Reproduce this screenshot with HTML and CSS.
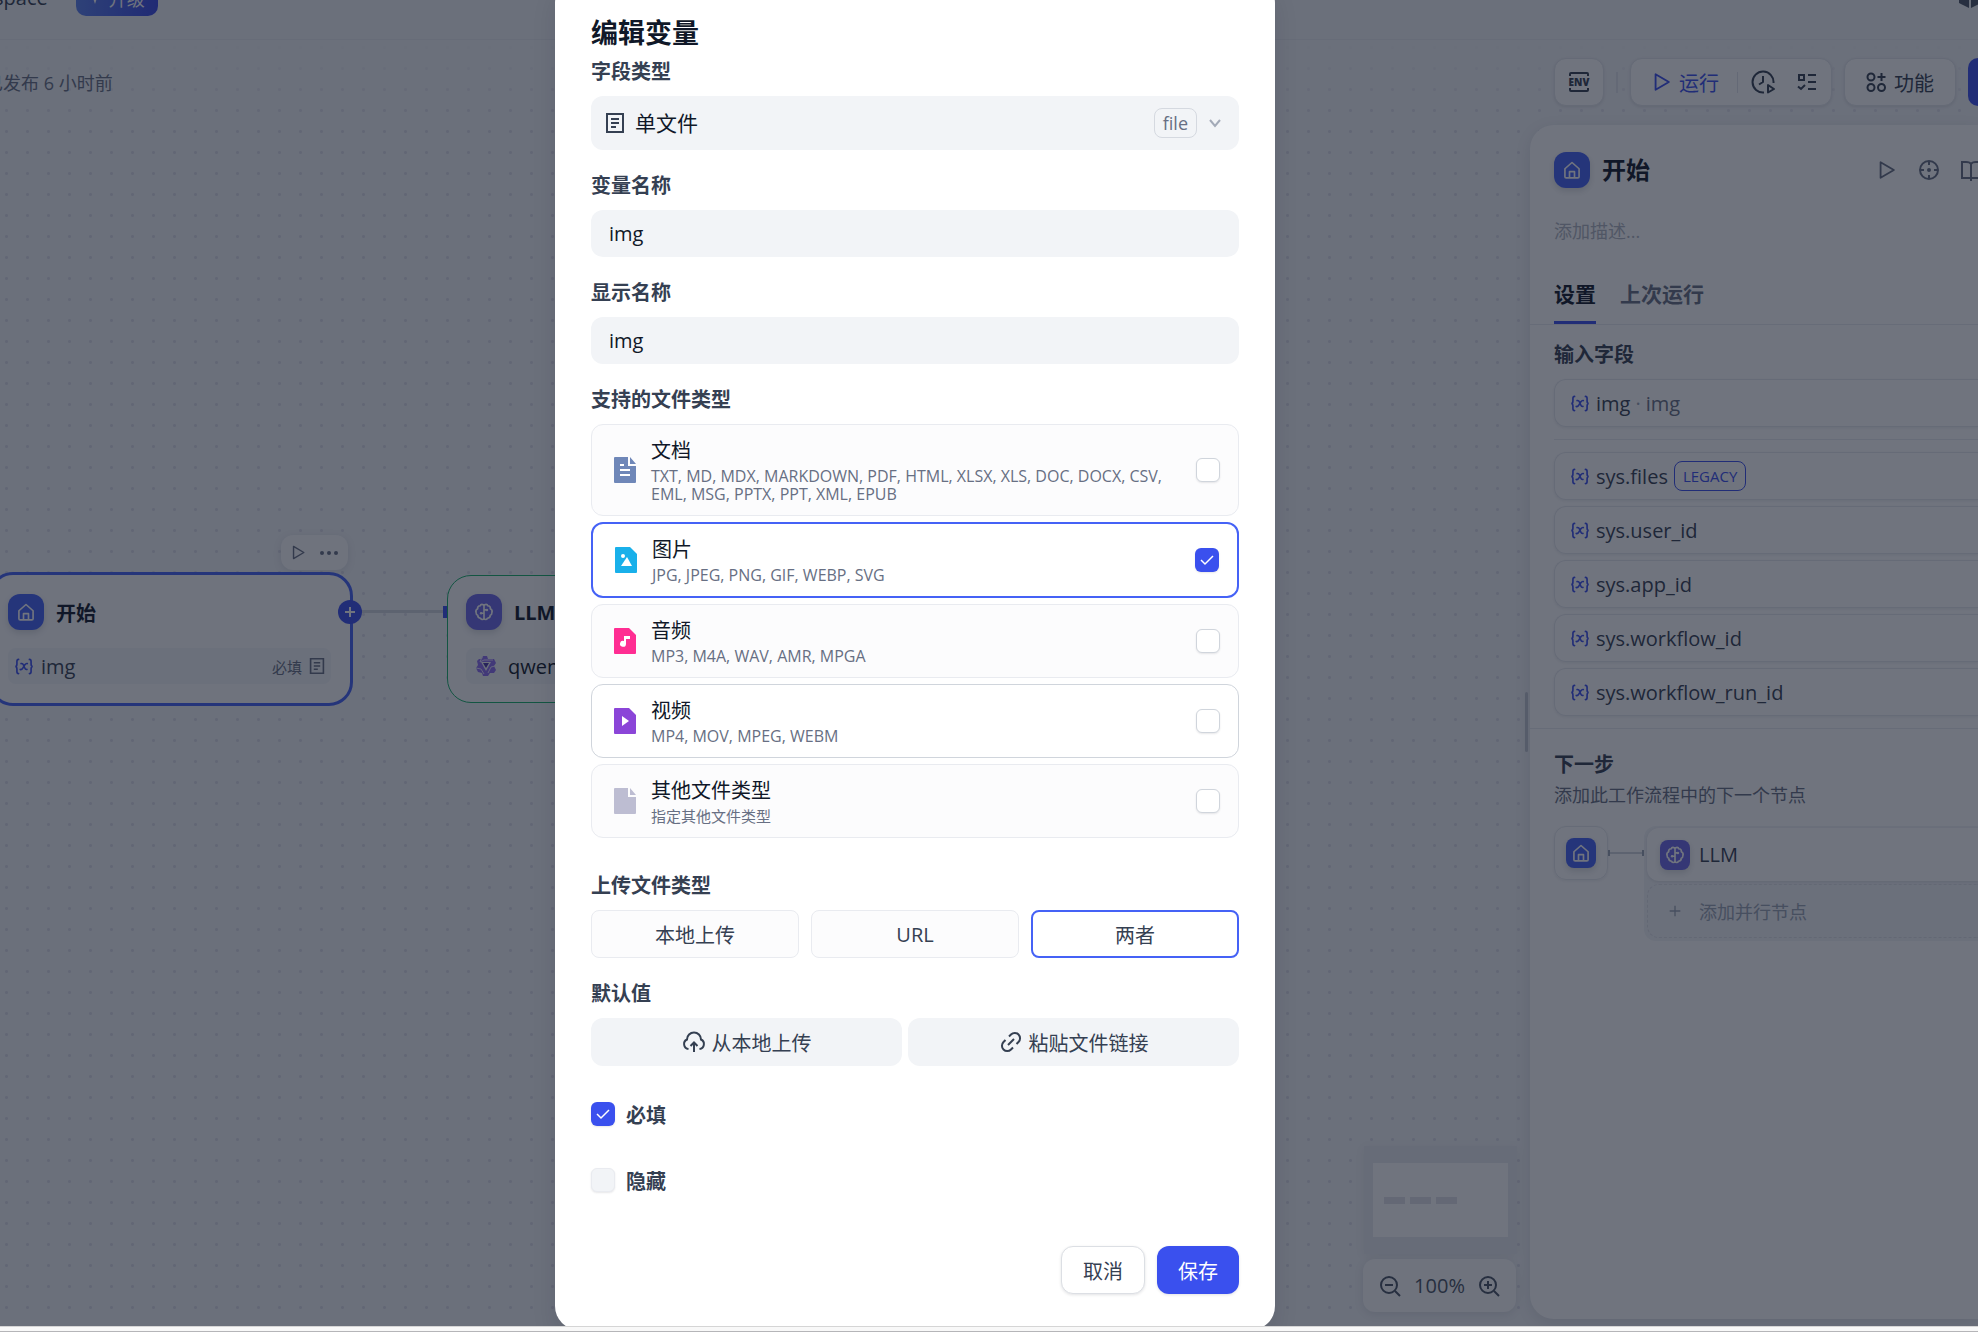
FILE: index.html
```html
<!DOCTYPE html>
<html lang="zh-CN">
<head>
    <meta charset="UTF-8">
    <meta name="viewport" content="width=device-width, initial-scale=1.0">
    <title>编辑变量</title>
    <link rel="stylesheet" href="styles.css">
</head>
<body>
    <!-- shared icons -->
    <svg class="sprite" aria-hidden="true">
        <symbol id="i-home" viewBox="0 0 24 24"><path d="M3.500 10.500 12 3l8.500 7.500V20a1.500 1.500 0 0 1-1.500 1.500H5A1.500 1.500 0 0 1 3.500 20z M9 21v-7h6v7" fill="none" stroke="currentColor" stroke-width="2" stroke-linejoin="round"/></symbol>
        <symbol id="i-llm" viewBox="0 0 24 24"><path d="M12 4v16M12 4.500C11 2.500 8 2.300 7.500 4.500 5 4.500 4 6.500 4.500 8 2.300 9 2 11 2.500 12.500 2.500 14 3 15.500 4.500 16 4.500 18.500 6 19.500 8 19.500 8.500 21.500 11.500 21.500 12 19.500M12 4.500C13 2.500 16 2.300 16.500 4.500 19 4.500 20 6.500 19.500 8 21.700 9 22 11 21.500 12.500 21.500 14 21 15.500 19.500 16 19.500 18.500 18 19.500 16 19.500 15.500 21.500 12.500 21.500 12 19.500M12 9.500h3.500M8 13.500h4" fill="none" stroke="currentColor" stroke-width="2" stroke-linejoin="round"/><circle cx="15.500" cy="9.500" r="1.500" fill="currentColor"/><circle cx="8.500" cy="13.500" r="1.500" fill="currentColor"/></symbol>
        <symbol id="i-play" viewBox="0 0 24 24"><path d="M5 3.500v17L19.500 12z" fill="none" stroke="currentColor" stroke-width="2" stroke-linejoin="round"/></symbol>
        <symbol id="i-var" viewBox="0 0 24 20"><path d="M5.500 1.500Q3.500 1.500 3.500 4v3Q3.500 10 1.500 10q2 0 2 3v3q0 2.500 2 2.500M18.500 1.500q2 0 2 2.500v3q0 3 2 3-2 0-2 3v3q0 2.500-2 2.500M8.500 6.500q2-.5 3 2l1.300 3q1 2.500 2.700 2M16 6.500q-1.500-.5-3 1.500l-2.500 4Q9 14.200 7.500 13.500" fill="none" stroke="currentColor" stroke-width="2" stroke-linecap="round"/></symbol>
        <symbol id="i-list" viewBox="0 0 20 20"><path d="M2 1h16v18H2zM6 6h8M6 10h8M6 14h5" fill="none" stroke="currentColor" stroke-width="2"/></symbol>
    </svg>

    <div class="app">
        <header class="topbar">
            <span class="workspace">space</span>
            <svg class="workspace-arrow" viewBox="0 0 10 10"><path d="M2 3l3 4 3-4" fill="currentColor"/></svg>
            <button class="upgrade"><svg viewBox="0 0 16 16"><path d="M8 0l2 6 6 2-6 2-2 6-2-6-6-2 6-2z" fill="currentColor"/></svg>升级</button>
            <svg class="cube" viewBox="0 0 22 24"><path d="M0 7l10-5v20L0 17zM12 2l10 5v10l-10 5z" fill="currentColor"/></svg>
        </header>

        <div class="toolbar">
            <span class="published">已发布 6 小时前</span>
            <div class="tools">
                <button class="tool" aria-label="环境变量">
                    <svg class="env" viewBox="0 0 22 22"><path d="M2 5V3q0-1 1-1h16q1 0 1 1v2M2 17v2q0 1 1 1h16q1 0 1-1v-2" fill="none" stroke="currentColor" stroke-width="2"/><text x="11" y="15" text-anchor="middle">ENV</text></svg>
                </button>
                <i class="sep"></i>
                <div class="tool run-group">
                    <button class="run"><svg width="22" height="22"><use href="#i-play"/></svg>运行</button>
                    <i class="sep"></i>
                    <button class="plain" aria-label="运行历史">
                        <svg width="24" height="24" viewBox="0 0 24 24" fill="none" stroke="currentColor" stroke-width="2"><path d="M13 22.500A10.500 10.500 0 1 1 22.500 13M12 6v6l-4 2.500M17 15v7.500l6-3.500z" stroke-linejoin="round"/></svg>
                    </button>
                    <button class="plain" aria-label="检查清单">
                        <svg width="20" height="20" viewBox="0 0 20 20" fill="none" stroke="currentColor" stroke-width="2"><path d="M2 3h5v5H2zM11 3h8M11 10h8M11 17h8M1 14.500 4 17l4-4"/></svg>
                    </button>
                </div>
                <button class="tool feature">
                    <svg width="20" height="20" viewBox="0 0 20 20" fill="none" stroke="currentColor" stroke-width="2"><circle cx="5" cy="5" r="3.500"/><circle cx="5" cy="15.500" r="3.500"/><circle cx="15.500" cy="15.500" r="3.500"/><path d="M15.500 1v8M11.500 5h8"/></svg>
                    功能
                </button>
                <button class="publish" aria-label="发布"></button>
            </div>
        </div>

        <main class="canvas">
            <div class="node-menu">
                <svg width="17" height="17"><use href="#i-play"/></svg>
                <svg width="20" height="6" viewBox="0 0 20 6" fill="currentColor"><circle cx="3" cy="3" r="2"/><circle cx="10" cy="3" r="2"/><circle cx="17" cy="3" r="2"/></svg>
            </div>
            <section class="node node-start">
                <div class="node-head"><span class="badge"><svg><use href="#i-home"/></svg></span>开始</div>
                <div class="node-row">
                    <svg class="var"><use href="#i-var"/></svg>
                    <span>img</span>
                    <small>必填</small>
                    <svg class="file-mark"><use href="#i-list"/></svg>
                </div>
            </section>
            <i class="edge"></i>
            <i class="port"></i>
            <button class="add-node" aria-label="添加节点"><svg viewBox="0 0 12 12"><path d="M6 1v10M1 6h10" stroke="currentColor" stroke-width="2"/></svg></button>
            <section class="node node-llm">
                <div class="node-head"><span class="badge violet"><svg><use href="#i-llm"/></svg></span>LLM</div>
                <div class="node-row model">
                    <svg width="22" height="22" viewBox="0 0 22 22"><path d="M8 1h4l1 3h6l2 4-2 3 2 4-2 3h-4l-2 3H8l-1-3-4-1-2-4 2-3-1-4 2-2h3z" fill="#8c6cf0"/><path d="M6 7h10l-5 9z" fill="#f2f4f7"/><path d="M8 8h6l-3 5z" fill="#4a36a8"/><path d="M1 13l5 1 3 5M7 2 5 7l4-2h9M20 11l-4 1-3 6" fill="none" stroke="#e4dcff"/></svg>
                    <span>qwen</span>
                </div>
            </section>

            <div class="minimap">
                <div class="minimap-view"><i></i><i></i><i></i></div>
            </div>
            <div class="zoom">
                <button class="plain" aria-label="缩小"><svg width="22" height="22" viewBox="0 0 22 22" fill="none" stroke="currentColor" stroke-width="2"><circle cx="10" cy="10" r="8"/><path d="M16 16l5 5M6 10h8"/></svg></button>
                <span>100%</span>
                <button class="plain" aria-label="放大"><svg width="22" height="22" viewBox="0 0 22 22" fill="none" stroke="currentColor" stroke-width="2"><circle cx="10" cy="10" r="8"/><path d="M16 16l5 5M6 10h8M10 6v8"/></svg></button>
            </div>
        </main>

        <i class="resize-handle"></i>
        <aside class="panel">
            <div class="panel-head">
                <span class="badge"><svg><use href="#i-home"/></svg></span>
                <h2>开始</h2>
                <div class="panel-actions">
                    <svg width="22" height="22"><use href="#i-play"/></svg>
                    <svg width="22" height="22" viewBox="0 0 22 22" fill="none" stroke="currentColor" stroke-width="2"><circle cx="11" cy="11" r="9"/><path d="M11 2v4M11 16v4M2 11h4M16 11h4"/><circle cx="11" cy="11" r="1"/></svg>
                    <svg width="18" height="22" viewBox="0 0 18 22" fill="none" stroke="currentColor" stroke-width="2"><path d="M18 3h-2q-4 0-5 2-1-2-5-2H2v16h16M11 5v17"/></svg>
                </div>
            </div>
            <p class="panel-desc">添加描述...</p>
            <nav class="tabs">
                <button class="tab active">设置</button>
                <button class="tab">上次运行</button>
            </nav>
            <div class="panel-body">
                <h3>输入字段</h3>
                <div class="field-row"><svg class="var"><use href="#i-var"/></svg>img<em>·</em><span>img</span></div>
                <hr>
                <div class="field-list">
                    <div class="field-row"><svg class="var"><use href="#i-var"/></svg>sys.files<b>LEGACY</b></div>
                    <div class="field-row"><svg class="var"><use href="#i-var"/></svg>sys.user_id</div>
                    <div class="field-row"><svg class="var"><use href="#i-var"/></svg>sys.app_id</div>
                    <div class="field-row"><svg class="var"><use href="#i-var"/></svg>sys.workflow_id</div>
                    <div class="field-row"><svg class="var"><use href="#i-var"/></svg>sys.workflow_run_id</div>
                </div>
            </div>
            <div class="panel-next">
                <h3>下一步</h3>
                <p>添加此工作流程中的下一个节点</p>
                <div class="next">
                    <div class="next-from"><span class="badge small"><svg><use href="#i-home"/></svg></span></div>
                    <i class="next-line"></i>
                    <div class="next-to">
                        <div class="next-node"><span class="badge small violet"><svg><use href="#i-llm"/></svg></span>LLM</div>
                        <button class="next-add"><svg viewBox="0 0 12 12"><path d="M6 2v8M2 6h8" stroke="currentColor" stroke-width="1"/></svg>添加并行节点</button>
                    </div>
                </div>
            </div>
        </aside>

        <div class="overlay">
            <form class="modal">
                <h1>编辑变量</h1>

                <label class="label" for="type">字段类型</label>
                <div class="select">
                    <svg width="20" height="20"><use href="#i-list"/></svg>
                    <select id="type"><option>单文件</option></select>
                    <span class="tag">file</span>
                    <svg class="chevron" width="14" height="14" viewBox="0 0 14 14"><path d="M2 4l5 6 5-6" fill="none" stroke="currentColor" stroke-width="2"/></svg>
                </div>

                <label class="label" for="name">变量名称</label>
                <input class="input" id="name" type="text" value="img">

                <label class="label" for="title">显示名称</label>
                <input class="input" id="title" type="text" value="img">

                <div class="label">支持的文件类型</div>
                <div class="types">
                    <label class="type">
                        <svg viewBox="0 0 30 30"><path d="M5 2h13v9h8v16q0 1-1 1H5q-1 0-1-1V3q0-1 1-1zM20 2l6 7h-6z" fill="#6f87b8"/><path d="M10 9h4v2h-4zM10 14h10v2H10zM10 19h10v2H10z" fill="#fff"/></svg>
                        <span><strong>文档</strong><small>TXT, MD, MDX, MARKDOWN, PDF, HTML, XLSX, XLS, DOC, DOCX, CSV, EML, MSG, PPTX, PPT, XML, EPUB</small></span>
                        <input type="checkbox">
                    </label>
                    <label class="type selected">
                        <svg viewBox="0 0 30 30"><path d="M5 2h14l7 7v18q0 1-1 1H5q-1 0-1-1V3q0-1 1-1z" fill="#19b0ea"/><path d="M10 21l6-9 5 9z" fill="#fff"/><circle cx="12" cy="11" r="2" fill="#fff"/></svg>
                        <span><strong>图片</strong><small>JPG, JPEG, PNG, GIF, WEBP, SVG</small></span>
                        <input type="checkbox" checked>
                    </label>
                    <label class="type">
                        <svg viewBox="0 0 30 30"><path d="M5 2h14l7 7v18q0 1-1 1H5q-1 0-1-1V3q0-1 1-1z" fill="#ff2d92"/><path d="M14 10h6v3h-4v5a3 3 0 1 1-2-3z" fill="#fff"/></svg>
                        <span><strong>音频</strong><small>MP3, M4A, WAV, AMR, MPGA</small></span>
                        <input type="checkbox">
                    </label>
                    <label class="type hover">
                        <svg viewBox="0 0 30 30"><path d="M5 2h14l7 7v18q0 1-1 1H5q-1 0-1-1V3q0-1 1-1z" fill="#8b45d8"/><path d="M12 10v10l7-5z" fill="#fff"/></svg>
                        <span><strong>视频</strong><small>MP4, MOV, MPEG, WEBM</small></span>
                        <input type="checkbox">
                    </label>
                    <label class="type">
                        <svg viewBox="0 0 30 30"><path d="M5 2h13v9h8v16q0 1-1 1H5q-1 0-1-1V3q0-1 1-1zM20 2l6 7h-6z" fill="#bdbdd2"/></svg>
                        <span><strong>其他文件类型</strong><small class="hint">指定其他文件类型</small></span>
                        <input type="checkbox">
                    </label>
                </div>

                <div class="label spaced">上传文件类型</div>
                <div class="methods">
                    <button type="button">本地上传</button>
                    <button type="button">URL</button>
                    <button type="button" class="selected">两者</button>
                </div>

                <div class="label">默认值</div>
                <div class="defaults">
                    <button type="button">
                        <svg viewBox="0 0 24 24"><path d="M6.500 19a5 5 0 0 1-1.500-9.500A7 7 0 0 1 19 9.500 5 5 0 0 1 17.500 19M12 22v-9M8.500 16l3.500-3.500 3.500 3.500"/></svg>
                        从本地上传
                    </button>
                    <button type="button">
                        <svg viewBox="0 0 24 24"><path d="M10 6.500l2-2a5.300 5.300 0 0 1 7.500 7.500L17.500 14M14 17.500l-2 2A5.300 5.300 0 0 1 4.500 12L6.500 10M9 15l6-6"/></svg>
                        粘贴文件链接
                    </button>
                </div>

                <label class="check"><input type="checkbox" checked>必填</label>
                <label class="check"><input type="checkbox" class="muted">隐藏</label>

                <div class="actions">
                    <button type="button" class="cancel">取消</button>
                    <button type="submit" class="save">保存</button>
                </div>
            </form>
        </div>
    </div>
    <footer class="frame-edge"></footer>
</body>
</html>
```
FILE: styles.css
```css
* {
    box-sizing: border-box;
}

body {
    margin: 0;
    height: 100vh;
    display: flex;
    flex-direction: column;
    overflow: hidden;
    font-family: "Open Sans", "Noto Sans CJK SC", sans-serif;
    font-size: 20px;
    color: #354052;
}

button,
input,
select {
    font: inherit;
    color: inherit;
    margin: 0;
}

button {
    display: flex;
    align-items: center;
    justify-content: center;
    padding: 0;
    border: none;
    background: none;
    cursor: pointer;
}

h1, h2, h3, p {
    margin: 0;
}

svg {
    display: block;
    flex: none;
}

.sprite {
    position: absolute;
    width: 0;
    height: 0;
}

.app {
    position: relative;
    flex: 1;
    min-height: 0;
    overflow: hidden;
    background-color: #f2f4f7;
    background-image: radial-gradient(circle, rgba(133, 133, 173, 0.2) 1px, transparent 2px);
    background-size: 21px 21px;
    background-position: -4px -5px;
}

.frame-edge {
    height: 6px;
    border-top: 1px solid #d5d5d5;
    border-bottom: 1px solid #b5b5b8;
    background: #f8f8f8;
}

/* top bar, scrolled half out of view */
.topbar {
    display: flex;
    align-items: center;
    height: 84px;
    margin-top: -44px;
    background: #f2f4f7;
    border-bottom: 1px solid #e9ebf0;
}

.workspace {
    margin-left: -6px;
    font-weight: 500;
}

.workspace-arrow {
    width: 10px;
    margin: 0 11px 0 7px;
}

.upgrade {
    width: 82px;
    height: 36px;
    gap: 8px;
    border-radius: 10px;
    background: linear-gradient(90deg, #5a80ee, #3a48e6);
    color: #fff;
    font-size: 18px;
}

.upgrade svg {
    width: 12px;
}

.cube {
    width: 22px;
    margin-left: auto;
    margin-right: -3px;
    color: #495464;
}

.toolbar {
    display: flex;
    align-items: center;
    justify-content: space-between;
    height: 84px;
    background: linear-gradient(#f2f4f7, rgba(242, 244, 247, 0));
}

.published {
    margin-left: -15px;
    font-size: 18px;
    color: #676f83;
}

.tools {
    display: flex;
    align-items: center;
    gap: 12px;
}

.tool {
    height: 48px;
    min-width: 50px;
    border: 1px solid #e3e5ea;
    border-radius: 12px;
    background: #fff;
    box-shadow: 0 1px 3px rgba(16, 24, 40, 0.1);
}

.env {
    width: 22px;
    overflow: visible;
}

.env text {
    font-family: "Open Sans", sans-serif;
    font-size: 10px;
    font-weight: 800;
    fill: currentColor;
}

.sep {
    width: 2px;
    height: 21px;
    background: #e2e4ea;
}

.run-group {
    display: flex;
    align-items: center;
    gap: 22px;
    width: 202px;
    padding-left: 20px;
}

.run {
    gap: 6px;
    color: #3a4eee;
}

.run-group .sep {
    width: 1px;
    margin: 0 -9px 0 -4px;
}

.feature {
    width: 112px;
    gap: 8px;
}

.publish {
    width: 10px;
    height: 48px;
    border-radius: 12px 0 0 12px;
    background: #3a4eee;
}

/* canvas: nodes sit on a free board */
.badge {
    display: flex;
    align-items: center;
    justify-content: center;
    flex: none;
    width: 36px;
    height: 36px;
    border-radius: 12px;
    background: #4562f6;
    color: #fff;
    box-shadow: 0 3px 6px rgba(16, 24, 40, 0.15);
}

.badge svg {
    width: 20px;
    height: 20px;
}

.badge.violet {
    background: #6b66e8;
}

.badge.small {
    width: 30px;
    height: 30px;
    border-radius: 8px;
}

.var {
    width: 20px;
    height: 17px;
    color: #3a4eee;
}

.node {
    position: absolute;
    width: 364px;
    padding: 19px 16px;
    border: 3px solid #4562f6;
    border-radius: 24px;
    background: #fcfcfd;
}

.node-start {
    left: -11px;
    top: 572px;
}

.node-llm {
    left: 447px;
    top: 575px;
    padding: 18px;
    border: 1px solid #17b26a;
}

.node-head {
    display: flex;
    align-items: center;
    gap: 12px;
    color: #101828;
    font-weight: 700;
}

.node-row {
    display: flex;
    align-items: center;
    gap: 7px;
    height: 36px;
    margin-top: 18px;
    padding: 0 6px;
    border-radius: 8px;
    background: #f2f4f7;
}

.node-start .node-row {
    margin-right: 3px;
}

.node-row small {
    margin-left: auto;
    font-size: 15px;
    color: #676f83;
}

.file-mark {
    width: 16px;
    height: 16px;
    color: #676f83;
}

.node-row.model {
    gap: 11px;
    padding: 0 9px;
    color: #101828;
}

.node-menu {
    position: absolute;
    left: 281px;
    top: 535px;
    display: flex;
    align-items: center;
    justify-content: center;
    gap: 12px;
    width: 67px;
    height: 35px;
    border-radius: 12px;
    background: #fcfcfd;
    box-shadow: 0 2px 8px rgba(16, 24, 40, 0.1);
    color: #676f83;
}

.edge {
    position: absolute;
    left: 353px;
    top: 610px;
    width: 94px;
    height: 3px;
    background: #d0d5dc;
}

.port {
    position: absolute;
    left: 443px;
    top: 606px;
    width: 4px;
    height: 12px;
    background: #3a4eee;
}

.add-node {
    position: absolute;
    left: 338px;
    top: 600px;
    width: 24px;
    height: 24px;
    border-radius: 50%;
    background: #3a4eee;
    color: #fff;
}

.add-node svg {
    width: 12px;
}

.minimap {
    position: absolute;
    right: 461px;
    bottom: 72px;
    width: 153px;
    padding: 17px 9px;
    background: #e9ebf0;
    box-shadow: 0 2px 10px rgba(16, 24, 40, 0.06);
}

.minimap-view {
    display: flex;
    align-items: center;
    gap: 5px;
    height: 74px;
    padding-left: 11px;
    background: #fff;
}

.minimap-view i {
    width: 21px;
    height: 7px;
    background: #e0e2e8;
}

.zoom {
    position: absolute;
    right: 462px;
    bottom: 14px;
    display: flex;
    align-items: center;
    justify-content: space-between;
    width: 153px;
    height: 53px;
    padding: 0 16px;
    border-radius: 12px;
    background: #fcfcfd;
    box-shadow: 0 2px 10px rgba(16, 24, 40, 0.1);
    color: #495464;
}

/* side panel */
.resize-handle {
    position: absolute;
    right: 450px;
    top: 692px;
    width: 3px;
    height: 60px;
    border-radius: 2px;
    background: #c5cad3;
}

.panel {
    position: absolute;
    right: 0;
    top: 125px;
    bottom: 7px;
    width: 448px;
    border-radius: 24px 0 0 24px;
    background: #fff;
    box-shadow: 0 4px 16px rgba(16, 24, 40, 0.1);
    overflow: hidden;
}

.panel-head {
    display: flex;
    align-items: center;
    gap: 12px;
    padding: 27px 0 0 24px;
}

.panel-head h2 {
    font-size: 24px;
    line-height: 36px;
    color: #101828;
}

.panel-actions {
    display: flex;
    gap: 20px;
    margin-left: auto;
    color: #676f83;
}

.panel-desc {
    margin: 30px 0 0 24px;
    font-size: 18px;
    line-height: 27px;
    color: #b0b5c0;
}

.tabs {
    display: flex;
    gap: 24px;
    padding: 33px 24px 0;
    border-bottom: 1px solid #e9ebf0;
}

.tab {
    height: 46px;
    padding: 0 0 11px;
    border-bottom: 3px solid transparent;
    font-size: 21px;
    line-height: 30px;
    font-weight: 700;
    color: #676f83;
}

.tab.active {
    border-bottom-color: #3a4eee;
    color: #101828;
}

.panel-body {
    padding: 12px 0 12px 24px;
    border-bottom: 1px solid #e9ebf0;
}

h3 {
    font-size: 20px;
    line-height: 36px;
}

.panel-body h3 {
    margin-bottom: 6px;
}

.panel-body hr {
    margin: 12px 0;
    border: none;
    border-top: 1px solid #e9ebf0;
}

.field-list {
    display: flex;
    flex-direction: column;
    gap: 6px;
}

.field-row {
    display: flex;
    align-items: center;
    height: 48px;
    padding-left: 15px;
    border: 1px solid #e6e8ed;
    border-right: none;
    border-radius: 12px 0 0 12px;
    box-shadow: 0 1px 3px rgba(16, 24, 40, 0.08);
}

.field-row .var {
    margin-right: 6px;
}

.field-row em {
    margin: 0 5px;
    font-style: normal;
    color: #98a2b2;
}

.field-row span {
    color: #676f83;
}

.field-row b {
    margin-left: 6px;
    padding: 0 8px;
    border: 1px solid #3a4eee;
    border-radius: 8px;
    font-size: 15px;
    font-weight: 400;
    line-height: 28px;
    color: #3a4eee;
}

.panel-next {
    padding: 18px 0 0 24px;
}

.panel-next p {
    font-size: 18px;
    line-height: 24px;
    color: #676f83;
}

.next {
    display: flex;
    margin-top: 19px;
}

.next-from {
    display: flex;
    align-items: center;
    justify-content: center;
    width: 54px;
    height: 54px;
    border: 1px solid #e6e8ed;
    border-radius: 12px;
    box-shadow: 0 1px 3px rgba(16, 24, 40, 0.08);
}

.next-line {
    width: 36px;
    height: 6px;
    margin-top: 24px;
    border: solid #98a2b2;
    border-width: 0 2px;
    background: linear-gradient(#d0d5dc, #d0d5dc) center / 100% 2px no-repeat;
}

.next-to {
    flex: 1;
    padding: 2px 0 3px 3px;
    border-radius: 12px 0 0 12px;
    background: #f2f4f7;
}

.next-node {
    display: flex;
    align-items: center;
    gap: 9px;
    height: 53px;
    padding-left: 13px;
    border-radius: 12px 0 0 12px;
    background: #fff;
    box-shadow: 0 1px 3px rgba(16, 24, 40, 0.1);
}

.next-add {
    width: 100%;
    height: 54px;
    margin-top: 3px;
    padding-left: 19px;
    gap: 16px;
    justify-content: flex-start;
    border: 1px dashed #dfe1e7;
    border-right: none;
    border-radius: 12px 0 0 12px;
    font-size: 18px;
    color: #98a2b2;
}

.next-add svg {
    width: 16px;
}

/* modal */
.overlay {
    position: absolute;
    inset: 0;
    display: flex;
    align-items: flex-end;
    justify-content: center;
    padding-right: 148px;
    background: rgba(16, 24, 40, 0.6);
}

.modal {
    width: 720px;
    margin-bottom: -4px;
    padding: 36px;
    border-radius: 24px;
    background: #fff;
    box-shadow: 0 12px 24px rgba(16, 24, 40, 0.1);
}

.modal h1 {
    font-size: 27px;
    line-height: 36px;
    color: #101828;
}

.label {
    display: block;
    margin: 18px 0 6px;
    font-weight: 700;
    line-height: 36px;
}

h1 + .label {
    margin-top: 3px;
}

.label.spaced {
    margin-top: 30px;
}

.select {
    display: flex;
    align-items: center;
    height: 54px;
    padding: 0 17px 0 14px;
    border-radius: 12px;
    background: #f2f4f7;
}

.select select {
    flex: 1;
    margin-left: 10px;
    border: none;
    appearance: none;
    background: none;
    font-size: 21px;
    color: #101828;
}

.tag {
    padding: 0 8px;
    border: 1px solid #d5d9e0;
    border-radius: 8px;
    font-size: 18px;
    line-height: 28px;
    color: #676f83;
}

.chevron {
    margin-left: 11px;
    color: #a3aab8;
}

.input {
    display: block;
    width: 100%;
    height: 47px;
    padding: 0 18px;
    border: none;
    border-radius: 12px;
    background: #f2f4f7;
    color: #101828;
}

.types {
    display: flex;
    flex-direction: column;
    gap: 6px;
}

.type {
    display: flex;
    align-items: center;
    gap: 11px;
    padding: 12px 18px;
    border: 1px solid #e9ebf0;
    border-radius: 12px;
    background: #fcfcfd;
}

.type svg {
    width: 30px;
}

.type span {
    flex: 1;
}

.type strong {
    display: block;
    margin-bottom: 3px;
    font-weight: 400;
    line-height: 27px;
    color: #101828;
}

.type small {
    display: block;
    font-size: 16px;
    line-height: 18px;
    color: #676f83;
}

.type .hint {
    font-size: 15px;
}

.type.selected {
    border: 2px solid #4562f6;
    background: #fff;
}

.type.hover {
    border-color: #d0d5dc;
    background: #fff;
}

input[type="checkbox"] {
    appearance: none;
    flex: none;
    width: 24px;
    height: 24px;
    border: 1px solid #d0d5dc;
    border-radius: 6px;
    background: #fff;
    box-shadow: 0 1px 2px rgba(16, 24, 40, 0.1);
}

input[type="checkbox"]:checked {
    border: none;
    background: #3a50ee url("data:image/svg+xml,%3Csvg xmlns='http://www.w3.org/2000/svg' viewBox='0 0 24 24'%3E%3Cpath d='M6 12l4 4 8-8' fill='none' stroke='white' stroke-width='1.500'/%3E%3C/svg%3E") center / 24px no-repeat;
}

input[type="checkbox"].muted {
    border-color: #e9ebf0;
    background: #f2f4f7;
}

.methods {
    display: grid;
    grid-template-columns: repeat(3, 1fr);
    gap: 12px;
}

.methods button {
    height: 48px;
    border: 1px solid #e9ebf0;
    border-radius: 8px;
    background: #fcfcfd;
}

.methods .selected {
    border: 2px solid #4562f6;
    background: #fff;
}

.defaults {
    display: flex;
    gap: 6px;
}

.defaults button {
    flex: 1 1 auto;
    height: 48px;
    gap: 6px;
    border-radius: 12px;
    background: #f2f4f7;
}

.defaults svg {
    width: 24px;
    fill: none;
    stroke: currentColor;
    stroke-width: 2;
}

.check {
    display: flex;
    align-items: center;
    gap: 11px;
    height: 36px;
    margin-top: 30px;
    font-weight: 700;
}

.actions {
    display: flex;
    justify-content: flex-end;
    gap: 12px;
    margin-top: 48px;
}

.actions button {
    height: 48px;
    padding: 0 21px;
    border-radius: 12px;
    box-shadow: 0 1px 3px rgba(16, 24, 40, 0.12);
}

.cancel {
    border: 1px solid #dcdfe4;
    background: #fff;
}

.save {
    background: #3a50ee;
    color: #fff;
}
```
